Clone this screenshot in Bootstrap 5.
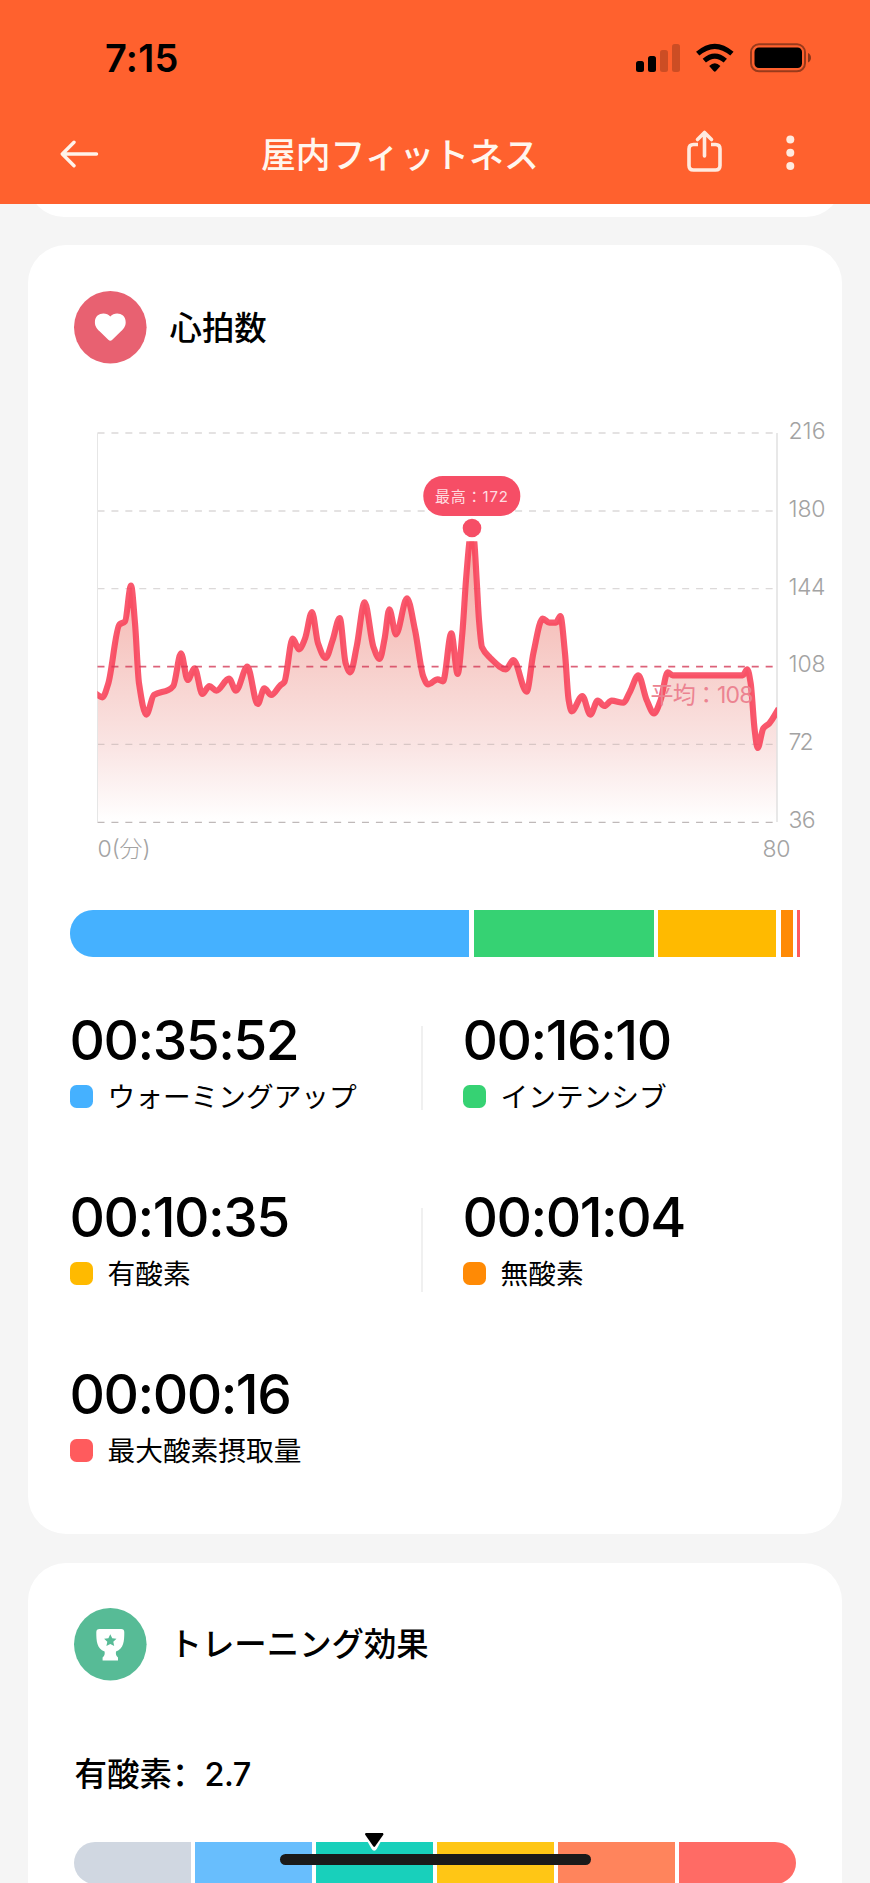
<!DOCTYPE html>
<html lang="ja">
<head>
<meta charset="utf-8">
<meta name="viewport" content="width=device-width, initial-scale=1">
<title>屋内フィットネス</title>
<link href="https://cdn.jsdelivr.net/npm/bootstrap@5.3.0/dist/css/bootstrap.min.css" rel="stylesheet">
<style>
body { background: #f5f5f5; color: #000; font-family: Inter, "Noto Sans CJK JP", sans-serif; }
.screen { width: 870px; height: 1883px; background: #f5f5f5; }
.topbar { height: 203.6px; background: #ff612e; }
.status { height: 116px; padding: 0 59px 0 105px; }
.clock { font-size: 38px; font-weight: 600; line-height: 1; letter-spacing: .2px; }
.appbar { height: 75px; padding: 0 74px 0 60px; color: #fff3ea; }
.app-title { font-size: 34.8px; font-weight: 500; line-height: 40px; color: #fff6ee; margin-left: 161px; padding-top: 2px; }
.actions { margin-bottom: 5px; }
.stub { height: 13.4px; }
.stub-body { height: 90px; border-radius: 36px; margin: 0 28px 0 27.5px; }
.panel { display: block; border: 0; border-radius: 38px; margin: 28px 28px 0 27.5px; }
.panel-heart { height: 1289px; padding-top: 46.3px; }
.panel-effect { height: 420px; padding-top: 45.5px; margin-top: 28.6px; }
.heading { padding-left: 46.5px; gap: 23px; height: 72.6px; }
.heading h2 { font-size: 32.4px; font-weight: 500; line-height: 40px; padding-top: 2px; }
.chart { display: block; overflow: visible; margin: 56px 0 0 52.5px; }
.chart text { font-size: 23px; font-weight: 300; fill: #a3a3a3; }
.chart .avg-label { font-weight: 400; fill: #ec8391; }
.chart .peak-label { font-size: 15px; font-weight: 400; fill: #ffdce0; }
.zones { height: 47px; margin: 40px 41px 0 42.5px; gap: 4.5px; border-radius: 23px 0 0 23px; }
.stats { padding: 55px 0 0 42.5px; }
.stat-row { height: 177px; }
.stat-cell { width: 351px; }
.rule { width: 1.5px; height: 84px; background: #f0f0f0; margin: 14px 40.5px 0 0; }
.rule-low { margin-top: 18.7px; }
.time { font-size: 55px; font-weight: 500; line-height: 56px; letter-spacing: -1.5px; margin-left: -.5px; }
.zone-name { font-size: 27.7px; line-height: 36px; margin-top: 9.5px; gap: 14.5px; }
.zone-name span { padding-top: 2px; }
.swatch { width: 23px; height: 23px; border-radius: 6.5px; }
.z1 { background: #45b1ff; } .z2 { background: #36d273; } .z3 { background: #ffba00; }
.z4 { background: #ff8a05; } .z5 { background: #ff5b5d; }
.score { font-size: 32.5px; font-weight: 500; line-height: 40px; margin: 71.5px 0 0 47px; }
.score .kolon { font-family: "Noto Sans CJK SC", sans-serif; }
.score .value { letter-spacing: -.5px; }
.levels { width: 722px; height: 41.5px; margin: 47px 0 0 46.5px; gap: 4.6px; border-radius: 21px; }
.l1 { background: #d0d7e1; } .l2 { background: #68befd; } .l3 { background: #18d0bb; }
.l4 { background: #ffc615; } .l5 { background: #ff845c; } .l6 { background: #ff6b65; }
.pointer { left: 360px; top: 1830px; }
.home { left: 280px; top: 1854px; width: 310.5px; height: 11px; border-radius: 6px; background: #1a1a1a; }
</style>
</head>
<body>
<main class="screen position-relative overflow-hidden">
  <header class="topbar">
    <div class="status d-flex align-items-center justify-content-between">
      <span class="clock">7:15</span>
      <svg width="176" height="30" viewBox="0 0 176 30">
        <g transform="translate(0 .5)">
        <rect x="1" y="17.500" width="8" height="11" rx="2.500"/>
        <rect x="13" y="12.500" width="8" height="16" rx="2.500"/>
        <rect x="25" y="6.500" width="8" height="22" rx="2.500" fill-opacity=".2"/>
        <rect x="37" y=".5" width="8" height="28" rx="2.500" fill-opacity=".2"/>
        <g fill="none" stroke="#000" stroke-width="5">
          <path d="M62.700 10.200Q79.800 -4.600 96.900 10.200"/>
          <path d="M69.300 17.200Q79.800 8.200 90.300 17.200"/>
        </g>
        <path d="M74.200 22.500Q79.800 17 85.400 22.500L81 27.600Q79.800 28.800 78.600 27.600Z"/>
        <rect x="116" y=".8" width="54" height="27" rx="8" fill="none" stroke="#000" stroke-opacity=".4" stroke-width="2"/>
        <rect x="119.500" y="4" width="47.500" height="20.500" rx="4.500"/>
        <path d="M173 9.500Q176 11 176 14.200T173 19Z" fill-opacity=".45"/>
        </g>
      </svg>
    </div>
    <nav class="appbar d-flex align-items-center">
      <svg width="40" height="30" viewBox="0 0 40 30" fill="none" stroke="currentColor" stroke-width="3.400" stroke-linecap="round" stroke-linejoin="round"><path d="M36.500 15H2.500M14 3.300L2.300 15L14 26.800"/></svg>
      <h1 class="app-title mb-0">屋内フィットネス</h1>
      <svg class="actions ms-auto" width="110" height="46" viewBox="0 0 110 46" fill="none" stroke="#ffeadf" stroke-width="3.600">
        <path d="M12 16.500H7.500Q3 16.500 3 21V37.500Q3 42 7.500 42H29.500Q34 42 34 37.500V21Q34 16.500 29.500 16.500H25"/>
        <path d="M18.500 28V5M11.500 11.500L18.500 4.500L25.500 11.500" stroke-linecap="round" stroke-linejoin="round"/>
        <g fill="#ffeadf" stroke="none"><circle cx="104.300" cy="11.500" r="4"/><circle cx="104.300" cy="24.700" r="4"/><circle cx="104.300" cy="37.900" r="4"/></g>
      </svg>
    </nav>
  </header>

  <div class="stub overflow-hidden d-flex align-items-end">
    <div class="stub-body bg-white flex-grow-1 flex-shrink-0"></div>
  </div>

  <section class="card panel panel-heart">
    <div class="heading d-flex align-items-center">
      <svg width="72.600" height="72.600" viewBox="0 0 72.600 72.600"><circle cx="36.300" cy="36.300" r="36.300" fill="#e86171"/><path d="M36.300 25.600C40.500 20.300 51.700 21.600 51.700 31.200C51.700 35.500 49.500 37.800 47 40.300L38.300 48.800Q36.300 50.600 34.300 48.800L25.600 40.300C23.100 37.800 20.900 35.500 20.900 31.200C20.900 21.600 32.100 20.300 36.300 25.600Z" fill="#fff"/></svg>
      <h2 class="mb-0">心拍数</h2>
    </div>

    <svg class="chart" width="760" height="450" viewBox="0 0 760 450">
      <defs>
        <linearGradient id="fade" gradientUnits="userSpaceOnUse" x1="0" y1="360" x2="0" y2="1205">
          <stop offset="0" stop-color="#f3aaa4"/><stop offset=".45" stop-color="#f7cfcb"/><stop offset=".75" stop-color="#fae6e5"/><stop offset="1" stop-color="#fff"/>
        </linearGradient>
        <clipPath id="plot"><rect x="52" y="364" width="2039" height="844"/></clipPath>
      </defs>
      <g clip-path="url(#plot)" transform="scale(.33333)">
        <path id="area" fill="url(#fade)"/>
      </g>
      <g stroke="#8a8080" stroke-opacity=".3" stroke-width="1.300" stroke-dasharray="7 6.920">
        <path d="M17.500 13H697M17.500 91H697M17.500 168.700H697M17.500 324.300H697"/>
        <path d="M17.500 402.300H697" stroke-opacity=".55"/>
      </g>
      <path d="M17.500 13V402" stroke="#e6e6e6"/><path d="M697 13V402" stroke="#dedede" stroke-width="1.400"/>
      <g clip-path="url(#plot)" transform="scale(.33333)">
        <path id="line" fill="none" stroke="#f83c55" stroke-opacity=".86" stroke-width="18.500"/>
      </g>
      <text class="avg-label" x="570.500" y="283" textLength="103">平均：108</text>
      <path d="M17.500 246.700H697" stroke="#d33b58" stroke-opacity=".8" stroke-width="1.700" stroke-dasharray="7 6.920"/>
      <circle cx="392" cy="108" r="9.300" fill="#f64e66"/>
      <rect x="343.300" y="56" width="97" height="40" rx="19.500" fill="#f64e66"/>
      <text class="peak-label" x="355" y="81.500" textLength="73">最高：172</text>
      <text x="708.500" y="18.500" textLength="37">216</text>
      <text x="708.500" y="96.500" textLength="37">180</text>
      <text x="708.500" y="174.500" textLength="37">144</text>
      <text x="708.500" y="252" textLength="37">108</text>
      <text x="708.500" y="330" textLength="25">72</text>
      <text x="708.500" y="407.500" textLength="27">36</text>
      <text x="17.500" y="436.500" textLength="53">0(分)</text>
      <text x="682.500" y="436.500" textLength="28">80</text>
    </svg>

    <div class="zones d-flex overflow-hidden">
      <div class="z1" style="width:399px"></div><div class="z2" style="width:180px"></div><div class="z3" style="width:118px"></div><div class="z4" style="width:12.300px"></div><div class="z5" style="width:2.800px"></div>
    </div>

    <div class="stats">
      <div class="stat-row d-flex">
        <div class="stat-cell"><div class="time">00:35:52</div><div class="zone-name d-flex align-items-center"><i class="swatch z1"></i><span>ウォーミングアップ</span></div></div>
        <div class="rule"></div>
        <div><div class="time">00:16:10</div><div class="zone-name d-flex align-items-center"><i class="swatch z2"></i><span>インテンシブ</span></div></div>
      </div>
      <div class="stat-row d-flex">
        <div class="stat-cell"><div class="time">00:10:35</div><div class="zone-name d-flex align-items-center"><i class="swatch z3"></i><span>有酸素</span></div></div>
        <div class="rule rule-low"></div>
        <div><div class="time">00:01:04</div><div class="zone-name d-flex align-items-center"><i class="swatch z4"></i><span>無酸素</span></div></div>
      </div>
      <div class="stat-row d-flex">
        <div class="stat-cell"><div class="time">00:00:16</div><div class="zone-name d-flex align-items-center"><i class="swatch z5"></i><span>最大酸素摂取量</span></div></div>
      </div>
    </div>
  </section>

  <section class="card panel panel-effect">
    <div class="heading d-flex align-items-center">
      <svg width="72.600" height="72.600" viewBox="0 0 72.600 72.600"><circle cx="36.300" cy="36.300" r="36.300" fill="#57bb96"/><path d="M25.500 21H47.100Q50.300 21 50.300 24.200C50.300 33 49.800 40.500 42 43.500Q41.300 47.500 44 49.500V52.500H28.600V49.500Q31.300 47.500 30.600 43.500C22.800 40.500 22.300 33 22.300 24.200Q22.300 21 25.500 21Z" fill="#fff"/><path d="M36.300 26.200L38.200 30.200L42.500 30.700L39.300 33.700L40.200 38L36.300 35.900L32.400 38L33.300 33.700L30.100 30.700L34.400 30.200Z" fill="#57bb96"/></svg>
      <h2 class="mb-0">トレーニング効果</h2>
    </div>
    <p class="score mb-0">有酸素<span class="kolon" lang="zh-CN">：</span><span class="value">2.7</span></p>
    <div class="levels d-flex overflow-hidden">
      <div class="flex-fill l1"></div><div class="flex-fill l2"></div><div class="flex-fill l3"></div><div class="flex-fill l4"></div><div class="flex-fill l5"></div><div class="flex-fill l6"></div>
    </div>
  </section>

  <svg class="pointer position-absolute" width="28" height="24" viewBox="0 0 28 24"><path d="M1.500 1H26.500L17 18.500Q14.200 23 11.400 18.500Z" fill="#fff"/><path d="M5.500 3H23L23.500 4.500L15 16.500Q14.200 17.300 13.400 16.500L5 4.500Z"/></svg>
  <div class="home position-absolute"></div>
</main>

<script src="https://cdn.jsdelivr.net/npm/bootstrap@5.3.0/dist/js/bootstrap.bundle.min.js"></script>
<script>
// Heart-rate samples, in thirds of a chart pixel
const pts = [[46,820],[67,832],[85,790],[118,614],[135,604],[153,497],[165,610],[177,790],[199,884],[222,825],[265,810],[280,798],[303,700],[323,780],[344,745],[367,822],[388,798],[409,812],[447,776],[468,812],[502,740],[533,852],[553,805],[574,825],[600,797],[613,786],[638,656],[657,688],[675,656],[696,576],[714,670],[737,714],[758,660],[779,594],[797,730],[811,757],[830,680],[854,547],[880,680],[899,717],[914,655],[928,568],[948,643],[981,535],[1005,630],[1030,770],[1044,793],[1073,778],[1089,784],[1114,640],[1133,762],[1147,640],[1158,480],[1168,366],[1175,310],[1183,366],[1190,480],[1197,600],[1206,682],[1230,713],[1278,748],[1300,720],[1340,815],[1360,700],[1388,596],[1408,608],[1428,608],[1441,588],[1455,700],[1466,840],[1475,874],[1507,828],[1531,884],[1553,842],[1573,858],[1595,842],[1630,848],[1650,815],[1675,766],[1700,840],[1722,880],[1742,840],[1763,757],[1778,766],[1988,766],[2002,748],[2012,790],[2024,930],[2033,984],[2050,925],[2068,910],[2096,866]];
// Monotone cubic interpolation keeps each peak and trough flat
const slope = pts.slice(1).map((p, i) => (p[1] - pts[i][1]) / (p[0] - pts[i][0]));
const tan = pts.map((p, i) => {
  if (i === 0) return slope[0];
  if (i === pts.length - 1) return slope[i - 1];
  const a = slope[i - 1], b = slope[i];
  return a * b <= 0 ? 0 : 2 * a * b / (a + b);
});
let d = 'M' + pts[0];
for (let i = 1; i < pts.length; i++) {
  const [x0, y0] = pts[i - 1], [x1, y1] = pts[i], h = (x1 - x0) / 3;
  d += `C${x0 + h} ${y0 + h * tan[i - 1]} ${x1 - h} ${y1 - h * tan[i]} ${x1} ${y1}`;
}
document.getElementById('line').setAttribute('d', d);
document.getElementById('area').setAttribute('d', d + 'V1207H46Z');
</script>
</body>
</html>
